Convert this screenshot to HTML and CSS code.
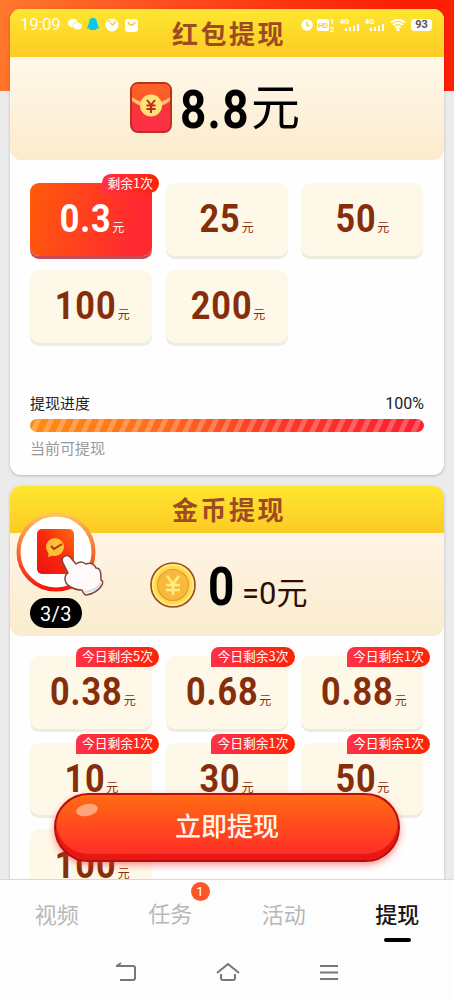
FILE: index.html
```html
<!DOCTYPE html>
<html lang="zh-CN">
<head>
<meta charset="utf-8">
<title>提现</title>
<link rel="stylesheet" href="styles.css">
</head>
<body>
<div class="screen">
  <div class="status">
    <span class="clock">19:09</span>
    <svg class="status-left" width="72" height="16" viewBox="0 0 72 16">
      <g fill="#fff"><ellipse cx="5" cy="6" rx="5" ry="4.3"/><ellipse cx="9.500" cy="9" rx="4.500" ry="3.700" stroke="#fddb33" stroke-width=".6"/><circle cx="44" cy="8" r="6.500"/><rect x="57" y="2" width="13" height="13" rx="3"/></g>
      <path d="M25 1c-3 0-4 2-4 5l-2 5 .5 1 1.500-1 1 2h6l1-2 1.500 1 .5-1-2-5c0-3-1-5-4-5z" fill="#08c8ee"/>
      <path d="M42 6l3 2 3-4M40 5l2-1M60 5c1 4 6 4 7 0" fill="none" stroke="#f5cb47" stroke-width="1.400"/>
    </svg>
    <svg class="status-right" width="110" height="16" viewBox="0 0 110 16">
      <g fill="#fff"><circle cx="6" cy="8" r="5.800"/><rect x="16" y="2" width="12" height="12" rx="2"/>
      <path d="M44 14v-3h2v3zM48 14v-4h2v4zM52 14V8.500h2V14zM56 14V7h2v7zM69 14v-3h2v3zM73 14v-4h2v4zM77 14V8.500h2V14zM81 14V7h2v7z"/><circle cx="97" cy="12.500" r="1.700"/></g>
      <path d="M6 4.500V8l2.500 1.500" fill="none" stroke="#fbd32f" stroke-width="1.500"/>
      <g fill="none" stroke="#fff" stroke-width="2"><path d="M90 5.500q7-5.500 14 0M92 8q5-4 10 0M94.300 10.500q2.700-2 5.400 0"/></g>
      <g class="tiny"><text x="17" y="10.500" fill="#f8ce42">HD</text><text x="29" y="6.500">1</text><text x="29" y="14.500">2</text><text x="39" y="7">4G</text><text x="64" y="7">4G</text></g>
    </svg>
    <span class="battery">93</span>
  </div>

  <section class="card cash">
    <h2 class="card-title">红包提现</h2>
    <div class="balance">
      <svg class="envelope" width="42" height="51" viewBox="0 0 42 51">
        <defs><linearGradient id="env" x2="0" y2="1"><stop stop-color="#fa5b28"/><stop offset=".5" stop-color="#f7363b"/><stop offset="1" stop-color="#ff2e4b"/></linearGradient></defs>
        <rect x="1" y="1" width="40" height="49" rx="7" fill="url(#env)" stroke="#bd321f" stroke-width="2"/>
        <path d="M2 6q0-4 5-4h28q5 0 5 4v9Q21 33 2 15z" fill="#ff6727" opacity=".65"/>
        <path d="M2 15q19 14 38 0v4q-19 14-38 0z" fill="#ffc66b"/>
        <circle cx="21" cy="23.500" r="11" fill="#ffe279"/>
        <path d="M17 18l4 5 4-5M21 23v8M16.500 23.500h9M16.500 27h9" fill="none" stroke="#bd301d" stroke-width="2"/>
      </svg>
      <span class="big">8.8</span><span class="big-unit">元</span>
    </div>
    <div class="grid">
      <div class="tile active"><b>0.3</b><i>元</i><em>剩余1次</em></div>
      <div class="tile"><b>25</b><i>元</i></div>
      <div class="tile"><b>50</b><i>元</i></div>
      <div class="tile"><b>100</b><i>元</i></div>
      <div class="tile"><b>200</b><i>元</i></div>
    </div>
    <div class="progress">
      <div class="progress-label"><span>提现进度</span><span class="percent">100%</span></div>
      <div class="bar"></div>
      <div class="hint">当前可提现</div>
    </div>
  </section>

  <section class="card coins">
    <h2 class="card-title">金币提现</h2>
    <div class="balance">
      <svg class="coin" width="48" height="48" viewBox="0 0 48 48">
        <circle cx="24" cy="24" r="22" fill="#ffda50" stroke="#97502d" stroke-width="1.700"/>
        <circle cx="24" cy="24" r="20" fill="none" stroke="#ffeb73" stroke-width="2"/>
        <circle cx="24" cy="24" r="15.500" fill="#f8b93f" stroke="#e99c30" stroke-width="1.200"/>
        <path d="M18 15l6 8 6-8M24 23v11M17 24h14M17 29h14" fill="none" stroke="#ffed7e" stroke-width="2.700"/>
      </svg>
      <span class="big zero">0</span><span class="equals">=0元</span>
    </div>
    <div class="grid">
      <div class="tile"><b>0.38</b><i>元</i><em>今日剩余5次</em></div>
      <div class="tile"><b>0.68</b><i>元</i><em>今日剩余3次</em></div>
      <div class="tile"><b>0.88</b><i>元</i><em>今日剩余1次</em></div>
      <div class="tile"><b>10</b><i>元</i><em>今日剩余1次</em></div>
      <div class="tile"><b>30</b><i>元</i><em>今日剩余1次</em></div>
      <div class="tile"><b>50</b><i>元</i><em>今日剩余1次</em></div>
      <div class="tile"><b>100</b><i>元</i></div>
    </div>
  </section>

  <div class="task">
    <svg width="90" height="82" viewBox="0 0 90 82">
      <defs><linearGradient id="ring" x2="0" y2="1"><stop stop-color="#ffc25d"/><stop offset=".5" stop-color="#f46a32"/><stop offset="1" stop-color="#f7150c"/></linearGradient>
      <linearGradient id="packet" x1="1" x2="0" y2="1"><stop stop-color="#ff6b10"/><stop offset=".5" stop-color="#f9280c"/><stop offset="1" stop-color="#e91410"/></linearGradient></defs>
      <circle cx="40" cy="37" r="37.500" fill="#fff" stroke="url(#ring)" stroke-width="4"/>
      <rect x="21" y="14" width="37" height="45" rx="5" fill="url(#packet)"/>
      <circle cx="39" cy="32" r="9" fill="#ffbe35"/><path d="M33 36l-1 6 7-2z" fill="#ffbe35"/>
      <path d="M35 31l3 3 8-5" fill="none" stroke="#9e3b13" stroke-width="2"/>
      <path d="M47 48c-3-6 4-10 8-5l5 6c4-3 8-2 10 0 5-2 9 1 10 4 5 0 5 6 5 12 2 1 2 3 1 5-3 5-9 9-16 10-2 0-3-3-4-5-9 0-17-5-17-11 0-3 1-5 3-6z" fill="#fffaf9" stroke="#82463b" stroke-width="1.500" stroke-linejoin="round"/>
      <path d="M69 77c7-1 13-4 16-9" fill="none" stroke="#dcd8e5" stroke-width="2"/>
    </svg>
    <span class="count">3/3</span>
  </div>

  <div class="cta"><span class="shine"></span>立即提现</div>

  <footer>
    <nav>
      <span>视频</span>
      <span class="with-dot">任务<small>1</small></span>
      <span>活动</span>
      <span class="current">提现</span>
    </nav>
    <div class="system">
      <svg width="22" height="20" viewBox="0 0 22 20"><path d="M1 4h17q2 0 2 2v10q0 2-2 2H5M6 1L1.500 4" /></svg>
      <svg width="24" height="20" viewBox="0 0 24 20"><path d="M1 11L12 2l11 9M5 12v4q0 2 2 2h10q2 0 2-2v-4"/></svg>
      <svg width="20" height="20" viewBox="0 0 20 20"><path d="M1 4h18M1 10.500h18M1 17h18"/></svg>
    </div>
  </footer>
</div>
</body>
</html>
```
FILE: styles.css
```css
* { box-sizing: border-box; }
body {
  margin: 0;
  font-family: Roboto, "Noto Sans CJK SC", sans-serif;
  color: #222;
}
.screen {
  position: relative;
  width: 454px;
  height: 1000px;
  padding: 9px 10px 0;
  overflow: hidden;
  background: linear-gradient(100deg, #ff792c 0%, #ff481d 40%, #fd2004 85%) 0 0 / 100% 91px no-repeat, #ebebec;
}
.status {
  position: absolute;
  z-index: 3;
  top: 16px;
  left: 20px;
  right: 22px;
  height: 17px;
  display: flex;
  align-items: center;
  color: #fffdf0;
}
.clock { width: 48px; font: 17px/17px Roboto, sans-serif; letter-spacing: -.4px; white-space: nowrap; }
.status-right { margin-left: auto; }
.tiny { font: bold 7.500px Roboto, sans-serif; fill: #fff; }
.battery {
  width: 21px;
  height: 12px;
  border-radius: 4px;
  background: #fff;
  color: #555;
  font: bold 11px/12px Roboto, sans-serif;
  text-align: center;
}
.card {
  height: 466px;
  border-radius: 11px;
  background: #fefefe;
  box-shadow: 0 1px 3px rgba(0, 0, 0, .22);
  overflow: hidden;
}
.coins { margin-top: 11px; }
.card-title {
  height: 48px;
  margin: 0;
  padding-left: 4px;
  background: linear-gradient(#fee630, #fccb24);
  color: #9d4b23;
  font: bold 26px/47px "Noto Sans CJK SC", sans-serif;
  letter-spacing: 2.500px;
  text-align: center;
}
.balance {
  height: 103px;
  display: flex;
  align-items: center;
  padding-left: 120px;
  border-radius: 0 0 11px 11px;
  background: linear-gradient(#fff8ea, #fcebcd);
  color: #000;
}
.envelope { margin-top: -2px; }
.big {
  width: 70px;
  margin: 2px 0 0 8px;
  font: bold 54px/103px Roboto, sans-serif;
  letter-spacing: 1.500px;
  transform: scaleX(.85);
  transform-origin: left center;
}
.big-unit { font-size: 49px; line-height: 98px; margin-left: 1px; }
.coins .card-title { height: 47px; line-height: 46px; }
.coins .balance { padding-left: 139px; background: linear-gradient(#fff4e7, #faeccd); }
.zero { width: 33px; margin: 4px 0 0 11px; }
.equals { font-size: 31px; color: #2d0d05; margin: 12px 0 0 1px; }
.grid {
  display: grid;
  grid-template-columns: repeat(3, 122px);
  grid-auto-rows: 73px;
  gap: 14px 13.500px;
  padding: 23px 0 0 20px;
}
.coins .grid { padding-top: 20px; grid-auto-rows: 72.500px; }
.tile {
  position: relative;
  display: flex;
  justify-content: center;
  align-items: baseline;
  border-radius: 9px;
  background: #fef8e9;
  box-shadow: 0 3px 0 #efecdf;
  color: #862e0a;
}
.tile b {
  margin-left: -4px;
  font: bold 38px/73px Roboto, sans-serif;
  letter-spacing: 1px;
  transform: scaleX(.9);
  transform-origin: right center;
}
.tile i { font-style: normal; font-size: 12px; line-height: 14px; margin-left: 1px; }
.tile em {
  position: absolute;
  top: -9px;
  right: -7px;
  height: 19px;
  padding: 0 6px;
  border-radius: 9px 10px 10px 0;
  background: linear-gradient(90deg, #ff3048, #fb2405);
  color: #fff;
  font: 12.800px/17px "Noto Sans CJK SC", sans-serif;
  white-space: nowrap;
}
.coins em { height: 20px; line-height: 18px; border-radius: 8px 10px 10px 0; }
.active {
  background: linear-gradient(100deg, #ff5b0b, #ff2830 85%);
  box-shadow: 0 3px 0 #c64c58;
  color: #fff;
}
.progress { padding: 50px 20px 0; }
.progress-label { display: flex; justify-content: space-between; font-size: 15px; line-height: 22px; }
.percent { font-size: 16px; }
.bar {
  height: 13px;
  margin-top: 4px;
  border-radius: 7px;
  background: repeating-linear-gradient(115deg, transparent 0 5px, rgba(255, 255, 255, .25) 6px 10px, transparent 11px 11.500px), linear-gradient(90deg, #ff8c12, #ff701b 30%, #fb3b24 60%, #fc2031);
}
.hint { margin-top: 6px; color: #999; font-size: 15px; line-height: 22px; }
.task { position: absolute; z-index: 2; left: 16px; top: 515px; width: 90px; height: 115px; }
.count {
  display: block;
  width: 52px;
  height: 30px;
  margin: -5px 0 0 14px;
  border-radius: 15px;
  background: #000;
  color: #fff;
  font: 20px/32px Roboto, sans-serif;
  letter-spacing: .5px;
  text-align: center;
}
.task svg { display: block; height: 88px; overflow: visible; padding-bottom: 6px; }
.cta {
  position: absolute;
  z-index: 2;
  left: 54px;
  top: 793px;
  width: 346px;
  height: 69px;
  border: 2px solid #b60e0d;
  border-radius: 35px;
  background: linear-gradient(#ff6b13, #ff3226 85%);
  box-shadow: inset 0 -6px 1px #e71714, 0 3px 7px rgba(255, 45, 45, .5);
  color: #fff5e9;
  font: 500 26px/59px "Noto Sans CJK SC", sans-serif;
  text-align: center;
}
.shine {
  position: absolute;
  left: 20px;
  top: 9px;
  width: 22px;
  height: 12px;
  border-radius: 50%;
  background: rgba(255, 205, 174, .65);
  transform: rotate(-12deg);
}
footer {
  position: absolute;
  z-index: 3;
  left: 0;
  top: 879px;
  width: 454px;
  height: 121px;
  border-top: 1px solid #d8d8d8;
  background: #fdfdfd;
}
nav { height: 70px; display: grid; grid-template-columns: repeat(4, 1fr); color: #b8b8b8; font-size: 22px; line-height: 72px; text-align: center; }
nav span { position: relative; }
nav .current { color: #171717; font-weight: 500; }
.current::after { content: ""; position: absolute; left: 43px; top: 58px; width: 27px; height: 4px; border-radius: 2px; background: #000; }
nav .with-dot { line-height: 69px; }
.with-dot small { position: absolute; left: 77px; top: 2px; width: 19px; height: 19px; border-radius: 50%; background: #fc5528; color: #fff; font-size: 13px; line-height: 19px; }
.system { display: flex; justify-content: center; gap: 79px; padding-top: 12px; }
.system path { fill: none; stroke: #777; stroke-width: 2; stroke-linejoin: round; }
```
